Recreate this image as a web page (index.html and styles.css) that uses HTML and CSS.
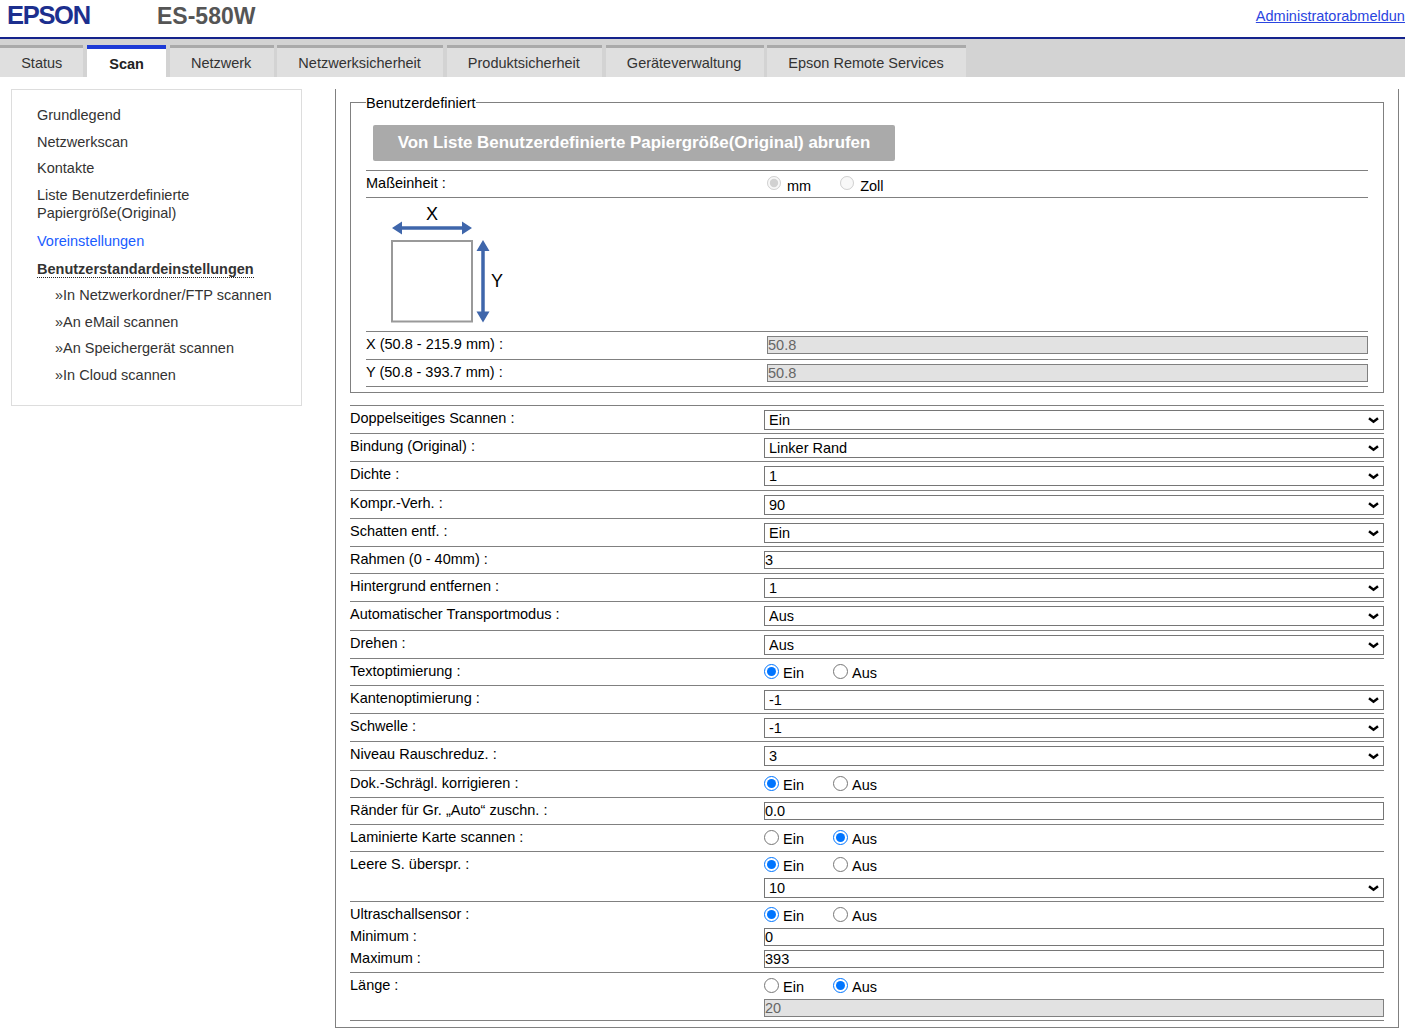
FILE: index.html
```html
<!DOCTYPE html>
<html lang="de">
<head>
<meta charset="utf-8">
<title>EPSON ES-580W</title>
<link rel="stylesheet" href="styles.css">
</head>
<body>
<header class="header">
  <span class="logo">EPSON</span>
  <span class="model">ES-580W</span>
  <a class="logout" href="#">Administratorabmeldung</a>
</header>
<nav class="tabs">
  <a class="tab">Status</a>
  <a class="tab tab-active">Scan</a>
  <a class="tab">Netzwerk</a>
  <a class="tab">Netzwerksicherheit</a>
  <a class="tab">Produktsicherheit</a>
  <a class="tab">Geräteverwaltung</a>
  <a class="tab">Epson Remote Services</a>
</nav>
<main class="main">
  <aside class="side">
    <a class="side-item">Grundlegend</a>
    <a class="side-item">Netzwerkscan</a>
    <a class="side-item">Kontakte</a>
    <a class="side-item">Liste Benutzerdefinierte Papiergröße(Original)</a>
    <a class="side-item side-link">Voreinstellungen</a>
    <a class="side-item side-current"><span>Benutzerstandardeinstellungen</span></a>
    <a class="side-item side-sub">»In Netzwerkordner/FTP scannen</a>
    <a class="side-item side-sub">»An eMail scannen</a>
    <a class="side-item side-sub">»An Speichergerät scannen</a>
    <a class="side-item side-sub">»In Cloud scannen</a>
  </aside>
  <section class="panel">
    <fieldset class="custom">
      <legend>Benutzerdefiniert</legend>
      <button class="fetch" type="button">Von Liste Benutzerdefinierte Papiergröße(Original) abrufen</button>
      <div class="frow unit">
        <span>Maßeinheit :</span>
        <div class="unit-opts">
          <label class="opt"><input type="radio" name="unit" checked disabled>mm</label>
          <label class="opt"><input type="radio" name="unit" disabled>Zoll</label>
        </div>
      </div>
      <div class="diagram">
        <svg width="125" height="133" viewBox="0 1 125 133">
          <rect x="1" y="44" width="80" height="80.500" fill="#fff" stroke="#999" stroke-width="2"/>
          <path d="M8 31H74" stroke="#3f66ab" stroke-width="3.500"/>
          <path d="M1 31l10-6.500v13zM81 31l-10-6.500v13z" fill="#3f66ab"/>
          <path d="M92 50V118" stroke="#3f66ab" stroke-width="3.500"/>
          <path d="M92 43l6.500 11H85.500zM92 125.500l-6.500-11h13z" fill="#3f66ab"/>
          <text x="41" y="23" class="axis" text-anchor="middle">X</text>
          <text x="106" y="90" class="axis" text-anchor="middle">Y</text>
        </svg>
      </div>
      <div class="frow">
        <span>X (50.8 - 215.9 mm) :</span>
        <input class="text off" type="text" value="50.8" disabled>
      </div>
      <div class="frow">
        <span>Y (50.8 - 393.7 mm) :</span>
        <input class="text off" type="text" value="50.8" disabled>
      </div>
    </fieldset>

    <div class="settings">
      <div class="row sel"><span>Doppelseitiges Scannen :</span><select><option>Ein</option></select></div>
      <div class="row sel"><span>Bindung (Original) :</span><select><option>Linker Rand</option></select></div>
      <div class="row sel"><span>Dichte :</span><select><option>1</option></select></div>
      <div class="row sel"><span>Kompr.-Verh. :</span><select><option>90</option></select></div>
      <div class="row sel"><span>Schatten entf. :</span><select><option>Ein</option></select></div>
      <div class="row"><span>Rahmen (0 - 40mm) :</span><input class="text" type="text" value="3"></div>
      <div class="row sel"><span>Hintergrund entfernen :</span><select><option>1</option></select></div>
      <div class="row sel"><span>Automatischer Transportmodus :</span><select><option>Aus</option></select></div>
      <div class="row sel"><span>Drehen :</span><select><option>Aus</option></select></div>
      <div class="row"><span>Textoptimierung :</span>
        <div class="radios"><label class="rad"><input type="radio" name="r1" checked>Ein</label><label class="rad"><input type="radio" name="r1">Aus</label></div></div>
      <div class="row sel"><span>Kantenoptimierung :</span><select><option>-1</option></select></div>
      <div class="row sel"><span>Schwelle :</span><select><option>-1</option></select></div>
      <div class="row sel"><span>Niveau Rauschreduz. :</span><select><option>3</option></select></div>
      <div class="row"><span>Dok.-Schrägl. korrigieren :</span>
        <div class="radios"><label class="rad"><input type="radio" name="r2" checked>Ein</label><label class="rad"><input type="radio" name="r2">Aus</label></div></div>
      <div class="row"><span>Ränder für Gr. „Auto“ zuschn. :</span><input class="text" type="text" value="0.0"></div>
      <div class="row"><span>Laminierte Karte scannen :</span>
        <div class="radios"><label class="rad"><input type="radio" name="r3">Ein</label><label class="rad"><input type="radio" name="r3" checked>Aus</label></div></div>
      <div class="row skip"><span>Leere S. überspr. :</span>
        <div class="radios"><label class="rad"><input type="radio" name="r4" checked>Ein</label><label class="rad"><input type="radio" name="r4">Aus</label></div>
        <span></span><select><option>10</option></select></div>
      <div class="row sonic"><span>Ultraschallsensor :</span>
        <div class="radios"><label class="rad"><input type="radio" name="r5" checked>Ein</label><label class="rad"><input type="radio" name="r5">Aus</label></div>
        <span>Minimum :</span><input class="text" type="text" value="0">
        <span>Maximum :</span><input class="text" type="text" value="393"></div>
      <div class="row length"><span>Länge :</span>
        <div class="radios"><label class="rad"><input type="radio" name="r6">Ein</label><label class="rad"><input type="radio" name="r6" checked>Aus</label></div>
        <span></span><input class="text off" type="text" value="20" disabled></div>
    </div>
  </section>
</main>
</body>
</html>
```
FILE: styles.css
```css
* { box-sizing: border-box; }
html, body { margin: 0; padding: 0; height: 1034px; overflow: hidden; background: #fff; }
body { font-family: "Liberation Sans", Arial, sans-serif; font-size: 14.5px; color: #000; }

.header { display: flex; align-items: flex-start; height: 37px; padding-left: 7px; overflow: hidden; }
.logo { font-size: 25.500px; font-weight: 700; line-height: 31px; color: #1c2f8e; letter-spacing: -1.300px; width: 150px; }
.model { font-size: 23px; font-weight: 700; line-height: 32px; color: #555; }
.logout { margin-left: auto; margin-right: -8px; margin-top: 8px; line-height: 17px; color: #2a45e0; white-space: nowrap; }

.tabs { display: flex; gap: 3.500px; height: 40px; padding-top: 6px; background: #d3d3d3; border-top: 2px solid #14238c; }
.tab { display: block; padding: 0 22.300px 0 21.200px; height: 32px; line-height: 30px; background: #dfdfdf; border-top: 3px solid #aaa; color: #333; }
.tab:first-child { padding-right: 21.200px; }
.tab-active { padding: 0 22.300px; background: #fff; border-top: 4px solid #1e3bd6; font-weight: 700; color: #222; }

.main { display: flex; align-items: flex-start; padding: 12px 0 0 11px; }

.side { width: 291px; height: 317px; margin-right: 33px; padding: 16px 20px 0 25px; border: 1px solid #ddd; flex: none; }
.side-item { display: block; line-height: 18.500px; margin-bottom: 8px; color: #333; }
.side-link { color: #1a5cff; margin-top: 9px; }
.side-current { font-weight: 700; margin-top: 10px; margin-bottom: 7.500px; }
.side-current span { border-bottom: 1px dotted #222; }
.side-sub { padding-left: 18px; }

.panel { width: 1064px; height: 939px; padding: 0 14px; border: 1px solid #808080; border-top: 0; flex: none; }

.custom { margin: 4px 0 0; padding: 13px 15px 5px; height: 300px; border: 1px solid #808080; }
.custom legend { padding: 2px 0 0; line-height: 17px; }
.fetch { display: block; width: 522px; height: 36px; margin: 0 0 9px 7px; padding: 0; border: 0; border-radius: 2px; background: #aaa; color: #fff; font: 700 16.900px "Liberation Sans", Arial, sans-serif; }

.frow { display: grid; grid-template-columns: 401px 601px; align-items: start; height: 28px; padding-top: 4px; border-top: 1px solid #808080; line-height: 17px; }
.frow:last-child { border-bottom: 1px solid #808080; }
.unit { height: 27px; }
.unit-opts { display: flex; gap: 29px; }
.opt { display: flex; align-items: center; gap: 6px; padding-top: 3px; }
.opt input { margin: -7px 0 0; width: 14px; height: 14px; }
.diagram { height: 134px; padding: 0 0 0 25px; border-top: 1px solid #808080; }
.diagram svg { display: block; }
.axis { font-size: 18px; fill: #000; }

.settings { margin-top: 11.900px; border-bottom: 1px solid #808080; width: 1034px; }
.row { display: grid; grid-template-columns: 414px 620px; align-content: start; height: 27px; padding-top: 4px; border-top: 1px solid #808080; line-height: 17px; }
.row.sel { height: 28.250px; }
.row select { appearance: none; width: 620px; height: 20px; margin: 0; padding: 0 0 0 4px; font: 14.5px "Liberation Sans", Arial, sans-serif; color: #000; background: #fff url("data:image/svg+xml,%3Csvg xmlns='http://www.w3.org/2000/svg' width='11' height='7'%3E%3Cpath d='M1 1.200l4.500 3.600 4.500-3.600' fill='none' stroke='%23000' stroke-width='2.400'/%3E%3C/svg%3E") no-repeat right 4px top 6px; border: 1px solid #767676; border-radius: 0; }
.text { width: 100%; height: 18px; margin: 0; padding: 0; font: 14.5px "Liberation Sans", Arial, sans-serif; color: #000; border: 1px solid #767676; border-radius: 0; background: #fff; outline: 0; }
.text.off { background: #e2e2e2; color: #666; border-color: #808080; opacity: 1; }
.radios { display: flex; height: 18px; }
.rad { display: flex; align-items: center; gap: 4px; width: 69px; padding-top: 4px; }
.rad input { width: 15px; height: 15px; margin: -5px 0 0; flex: none; }

.skip { height: 50px; }
.skip select { margin-top: 4px; }
.sonic { height: 71px; row-gap: 4px; }
.length { height: 48px; row-gap: 4px; }
```
